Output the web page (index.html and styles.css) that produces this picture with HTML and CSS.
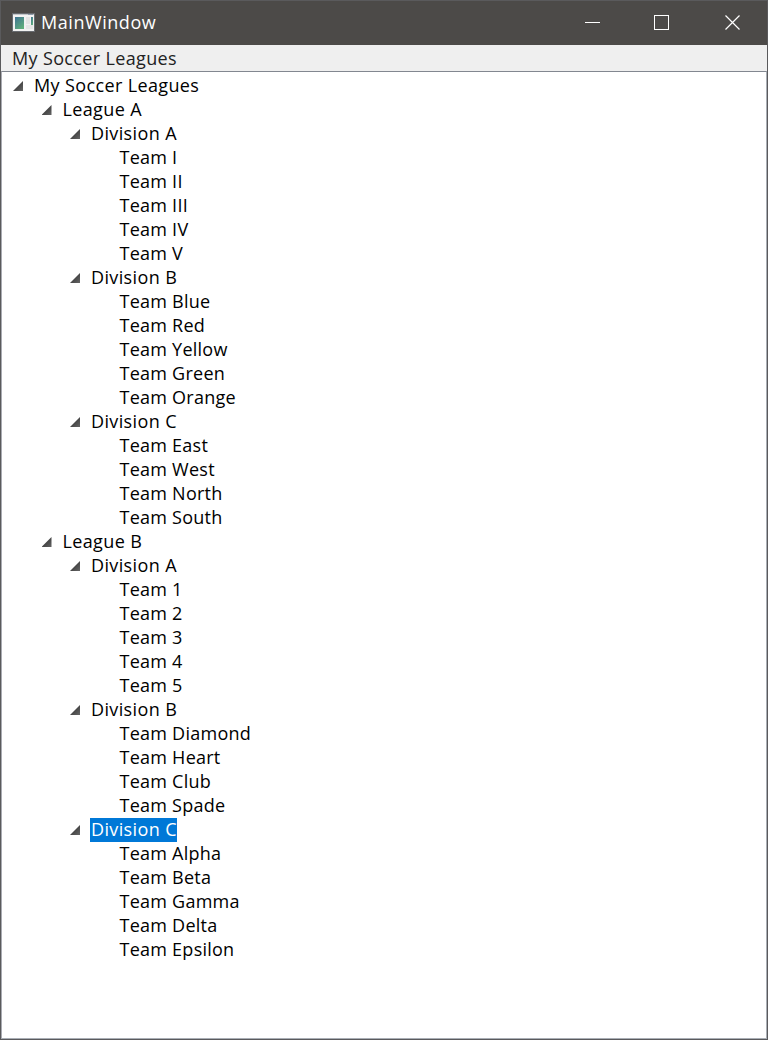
FILE: index.html
```html
<!DOCTYPE html>
<html lang="en">
<head>
<meta charset="utf-8">
<title>MainWindow</title>
<link rel="stylesheet" href="styles.css">
</head>
<body>
<div class="window">
  <header class="titlebar">
    <svg class="app-icon" width="24" height="20" viewBox="0 0 24 20">
      <defs><linearGradient id="pane" x1="0" y1="0" x2=".7" y2="1"><stop offset="0" stop-color="#3e7293"/><stop offset="1" stop-color="#5fae7c"/></linearGradient></defs>
      <rect x=".5" y=".5" width="22" height="18" fill="#f2f2f2" stroke="#686b70"/>
      <path d="M1 1.5H22" stroke="#c3c6ca"/><path d="M16 1.5H21" stroke="#8d99a8"/>
      <rect x="3" y="4" width="9" height="12" fill="url(#pane)"/>
      <rect x="14" y="4" width="4" height="7" fill="#e4e4e4"/><rect x="14" y="12" width="7" height="4" fill="#e6e6e6"/>
      <rect x="19" y="4" width="2" height="8" fill="url(#pane)"/>
    </svg>
    <h1 class="title">MainWindow</h1>
    <div class="controls">
      <svg width="15" height="16" viewBox="0 0 15 16"><path d="M0 8.5H15" stroke="#fff"/></svg>
      <svg width="15" height="16" viewBox="0 0 15 16"><rect x=".5" y="1.5" width="14" height="14" fill="none" stroke="#fff"/></svg>
      <svg class="close" width="15" height="16" viewBox="0 0 15 16"><path d="M.5 1.5L14.5 15.5M14.5 1.5L.5 15.5" stroke="#fff" stroke-width="1.2"/></svg>
    </div>
  </header>
  <nav class="menubar"><span class="menu">My Soccer Leagues</span></nav>
  <main class="tree">
    <ul class="branch">
      <li><div class="row open"><span>My Soccer Leagues</span></div>
        <ul class="branch">
          <li><div class="row open"><span>League A</span></div>
            <ul class="branch">
              <li><div class="row open"><span>Division A</span></div>
                <ul class="branch">
                  <li class="row"><span>Team I</span></li>
                  <li class="row"><span>Team II</span></li>
                  <li class="row"><span>Team III</span></li>
                  <li class="row"><span>Team IV</span></li>
                  <li class="row"><span>Team V</span></li>
                </ul></li>
              <li><div class="row open"><span>Division B</span></div>
                <ul class="branch">
                  <li class="row"><span>Team Blue</span></li>
                  <li class="row"><span>Team Red</span></li>
                  <li class="row"><span>Team Yellow</span></li>
                  <li class="row"><span>Team Green</span></li>
                  <li class="row"><span>Team Orange</span></li>
                </ul></li>
              <li><div class="row open"><span>Division C</span></div>
                <ul class="branch">
                  <li class="row"><span>Team East</span></li>
                  <li class="row"><span>Team West</span></li>
                  <li class="row"><span>Team North</span></li>
                  <li class="row"><span>Team South</span></li>
                </ul></li>
            </ul></li>
          <li><div class="row open"><span>League B</span></div>
            <ul class="branch">
              <li><div class="row open"><span>Division A</span></div>
                <ul class="branch">
                  <li class="row"><span>Team 1</span></li>
                  <li class="row"><span>Team 2</span></li>
                  <li class="row"><span>Team 3</span></li>
                  <li class="row"><span>Team 4</span></li>
                  <li class="row"><span>Team 5</span></li>
                </ul></li>
              <li><div class="row open"><span>Division B</span></div>
                <ul class="branch">
                  <li class="row"><span>Team Diamond</span></li>
                  <li class="row"><span>Team Heart</span></li>
                  <li class="row"><span>Team Club</span></li>
                  <li class="row"><span>Team Spade</span></li>
                </ul></li>
              <li><div class="row open selected"><span>Division C</span></div>
                <ul class="branch">
                  <li class="row"><span>Team Alpha</span></li>
                  <li class="row"><span>Team Beta</span></li>
                  <li class="row"><span>Team Gamma</span></li>
                  <li class="row"><span>Team Delta</span></li>
                  <li class="row"><span>Team Epsilon</span></li>
                </ul></li>
            </ul></li>
        </ul></li>
    </ul>
  </main>
</div>
</body>
</html>
```
FILE: styles.css
```css
* { box-sizing: border-box; }
body { margin: 0; font-family: "Open Sans", "Noto Sans", sans-serif; font-size: 18px; color: #000; }
.window {
  width: 768px; height: 1040px; display: flex; flex-direction: column;
  border: 1px solid #5a5a5c; background: #fff;
}
.titlebar {
  height: 44px; flex: none; display: flex; align-items: center;
  padding-left: 11px; background: #4c4a48; color: #fff;
}
.app-icon { display: block; margin-top: -1px; }
.title { margin: 0 0 0 5px; font-size: 18px; font-weight: 400; line-height: 42px; height: 44px; letter-spacing: .55px; }
.controls { margin-left: auto; display: flex; gap: 54px; padding-right: 27px; }
.controls svg { display: block; margin-top: -2px; }
.controls .close { margin-left: 2px; }
.menubar { height: 26px; flex: none; background: #efefef; padding-left: 11px; line-height: 26px; letter-spacing: .35px; color: #222; }
.tree {
  flex: 1; padding: 2px 0 0 9px;
  border: 1px solid #828790; border-left-color: #a9abb2; border-right-color: #a9aeb5; border-bottom-color: #a9aeb5;
}
.branch { list-style: none; margin: 0; padding: 0; }
.branch .branch { padding-left: 28.5px; }
.row { height: 24px; line-height: 22px; padding-left: 21px; display: flex; white-space: nowrap; letter-spacing: .25px; }
.row span { display: block; height: 24px; padding-left: 2px; }
.open { padding-left: 0; letter-spacing: .37px; }
.open::before {
  content: ""; width: 10px; height: 10px; margin: 7px 9px 0 2px; flex: none;
  background: linear-gradient(135deg, #262626, #666); clip-path: polygon(100% 0, 100% 100%, 0 100%);
}
.selected span { background: #0078d7; color: #fff; width: 87px; margin-left: 1px; padding-left: 1px; overflow: hidden; }
```
